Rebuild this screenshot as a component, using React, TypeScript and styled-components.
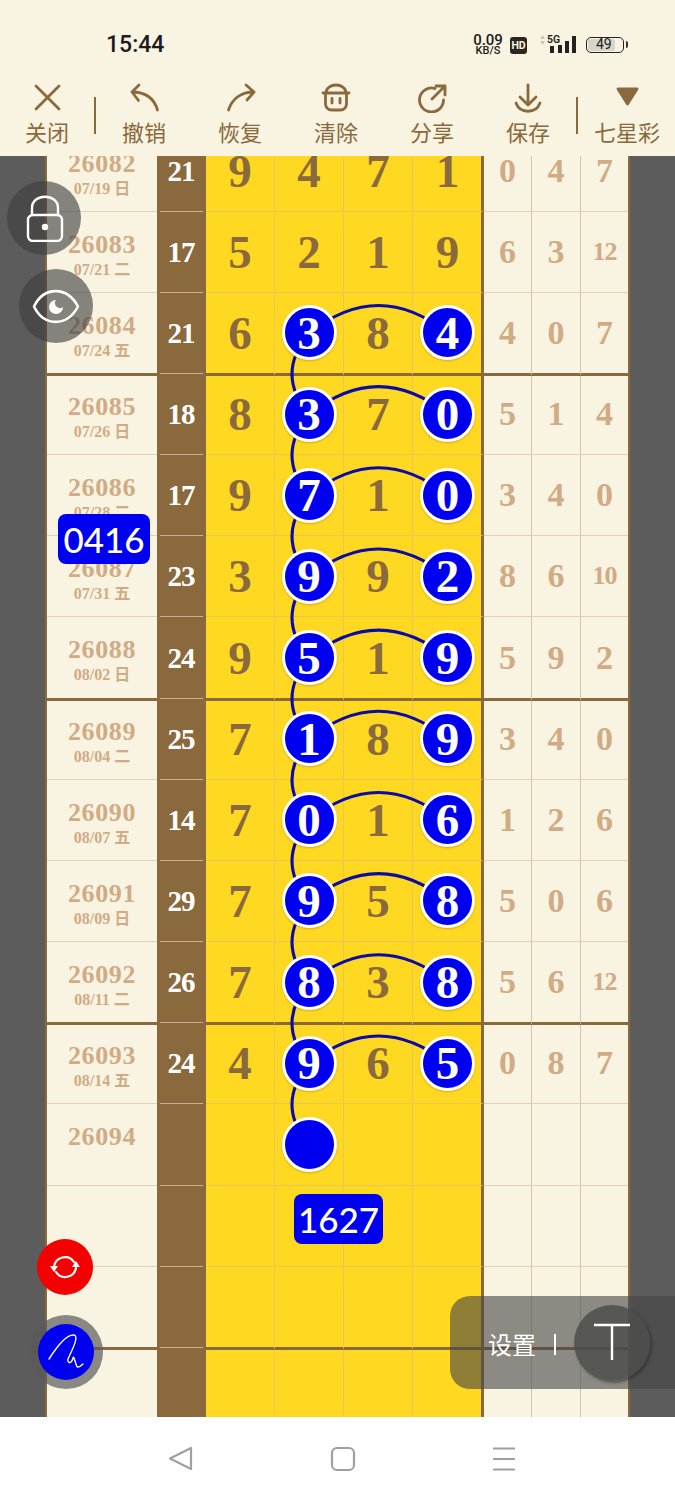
import React from "react";
import styled, { createGlobalStyle } from "styled-components";

const BROWN = "#8a693d";
const CREAM = "#f8f4e1";
const YELLOW = "#ffd821";
const DIM = "#d0ab85";
const DARK = "#5c5c5c";
const BLUE = "#0000f0";
const SERIF = `"Liberation Serif", "Noto Sans CJK SC", serif`;
const CJK = `"Noto Sans CJK SC", "Noto Sans", sans-serif`;
const ROW_H = 81.17;
const FIRST_TOP = -25.5;

const Global = createGlobalStyle`
  html, body { margin: 0; padding: 0; background: #fff; }
  * { box-sizing: border-box; }
`;

const Phone = styled.div`
  position: relative;
  width: 675px;
  height: 1500px;
  overflow: hidden;
  display: flex;
  flex-direction: column;
  background: #fff;
`;

const Header = styled.header`
  height: 156px;
  background: ${CREAM};
  display: flex;
  flex-direction: column;
`;

const StatusBar = styled.div`
  height: 81px;
  padding: 32px 51px 0 106px;
  display: flex;
  justify-content: space-between;
  align-items: flex-start;
  color: #1c1c1c;
`;

const Clock = styled.span`
  font: 500 23px/26px Roboto, sans-serif;
`;

const StatusGroup = styled.div`
  display: flex;
  align-items: center;
  height: 26px;
`;

const Speed = styled.div`
  width: 32px;
  display: flex;
  flex-direction: column;
  align-items: center;
  font: 500 15px/12px Roboto, sans-serif;
  & > small { font-size: 11px; line-height: 10px; }
`;

const HdTag = styled.span`
  margin-left: 6px;
  width: 17px;
  height: 17px;
  border-radius: 3px;
  background: #2b2620;
  color: ${CREAM};
  text-align: center;
  font: 700 10.5px/17px Roboto, sans-serif;
`;

const SignalWrap = styled.div`
  margin-left: 9px;
  position: relative;
  width: 42px;
  height: 26px;
`;

const FiveG = styled.span`
  position: absolute;
  left: 11px;
  top: 2px;
  font: 600 10.5px/11px Roboto, sans-serif;
`;

const Battery = styled.div`
  margin-left: 8px;
  width: 38px;
  height: 16px;
  border: 1.5px solid #222;
  border-radius: 5px;
  padding: 1px;
  position: relative;
  &::after {
    content: "";
    position: absolute;
    right: -5px;
    top: 3px;
    width: 2px;
    height: 7px;
    background: #333;
    border-radius: 0 2px 2px 0;
  }
`;

const BatteryFill = styled.div`
  width: 27px;
  height: 100%;
  border-radius: 2px;
  background: #d5d5c8;
  position: relative;
  font: 400 14px/11px Roboto, sans-serif;
  color: #222;
  & > span { position: absolute; left: 8px; top: 0; }
`;

const Toolbar = styled.nav`
  flex: 1;
  display: flex;
  align-items: flex-start;
`;

const ToolItem = styled.div<{ $w: number }>`
  width: ${(p) => p.$w}px;
  flex: none;
  display: flex;
  flex-direction: column;
  align-items: center;
  color: ${BROWN};
`;

const ToolIcon = styled.svg`
  width: 32px;
  height: 32px;
  display: block;
  fill: none;
  stroke: ${BROWN};
  stroke-width: 2.8;
  stroke-linecap: round;
  stroke-linejoin: round;
`;

const ToolLabel = styled.span`
  margin-top: 5px;
  font: 400 22px/26px ${CJK};
  white-space: nowrap;
`;

const ToolSep = styled.div`
  flex: none;
  width: 2px;
  height: 37px;
  margin-top: 16px;
  background: ${BROWN};
`;

const Board = styled.main`
  position: relative;
  height: 1261px;
  overflow: hidden;
  background: ${DARK};
  padding: 0 45px;
`;

const Sheet = styled.div`
  margin-top: ${FIRST_TOP}px;
  border-left: 2px solid ${BROWN};
  border-right: 2px solid ${BROWN};
  display: grid;
  grid-auto-rows: ${ROW_H}px;
`;

const Row = styled.div`
  display: grid;
  grid-template-columns: 110px 49px 69px 69px 69px 71px 48px 49px 47px;
`;

const cellBorder = (thick?: boolean, color?: string) =>
  thick
    ? `position: relative; margin-bottom: -2px; border-bottom: 3px solid ${BROWN};`
    : `border-bottom: 1px solid ${color};`;

const PeriodCell = styled.div<{ $thick?: boolean }>`
  background: ${CREAM};
  ${(p) => cellBorder(p.$thick, "#e4cfb8")}
  padding-top: 20px;
  display: flex;
  flex-direction: column;
  align-items: center;
  color: ${DIM};
  font-family: ${SERIF};
  font-weight: 700;
`;

const PeriodNo = styled.span`
  font-size: 26px;
  line-height: 26px;
  letter-spacing: 0.6px;
`;

const PeriodDate = styled.span`
  margin-top: 2px;
  font-size: 16px;
  line-height: 20px;
  white-space: pre;
`;

const SumCell = styled.div`
  position: relative;
  background: ${BROWN};
  color: #fff;
  display: flex;
  align-items: center;
  justify-content: center;
  padding-right: 1px;
  font: 700 29px ${SERIF};
  letter-spacing: -1px;
  &::after {
    content: "";
    position: absolute;
    left: 3px;
    right: 3px;
    bottom: 0;
    height: 1px;
    background: #c9b08c;
  }
`;

const NumCell = styled.div<{ $thick?: boolean; $last?: boolean }>`
  background: ${YELLOW};
  ${(p) => cellBorder(p.$thick, "#eac653")}
  border-right: ${(p) => (p.$last ? `3px solid ${BROWN}` : "1px solid #eac653")};
  padding-left: ${(p) => (p.$last ? "1px" : "0")};
  display: flex;
  align-items: center;
  justify-content: center;
  color: ${BROWN};
  font: 700 47px ${SERIF};
`;

const Ball = styled.div`
  position: relative;
  z-index: 2;
  width: 55px;
  height: 55px;
  flex: none;
  border-radius: 50%;
  background: ${BLUE};
  border: 3px solid #fff;
  box-shadow: 0 1px 2px rgba(120, 90, 0, 0.35);
  color: #fff;
  display: flex;
  align-items: center;
  justify-content: center;
  font: 700 47px ${SERIF};
`;

const TailCell = styled.div<{ $thick?: boolean; $last?: boolean; $small?: boolean }>`
  background: ${CREAM};
  ${(p) => cellBorder(p.$thick, "#e4cfb8")}
  border-right: ${(p) => (p.$last ? "0" : "1px solid #d6c3aa")};
  display: flex;
  align-items: center;
  justify-content: center;
  color: ${DIM};
  font: 700 ${(p) => (p.$small ? "26px" : "34px")} ${SERIF};
  letter-spacing: ${(p) => (p.$small ? "-1px" : "0")};
`;

const Links = styled.svg`
  position: absolute;
  left: 0;
  top: 0;
  width: 675px;
  height: 1261px;
  z-index: 1;
  fill: none;
  stroke: #0b0ba6;
  stroke-width: 3;
  pointer-events: none;
`;

const CodeBadge = styled.div<{ $x: number; $y: number; $w: number }>`
  position: absolute;
  z-index: 3;
  left: ${(p) => p.$x}px;
  top: ${(p) => p.$y}px;
  width: ${(p) => p.$w}px;
  height: 50px;
  border-radius: 8px;
  background: ${BLUE};
  color: #fff;
  text-align: center;
  font: 500 35px/51px Lato, sans-serif;
`;

const RoundFloat = styled.div<{ $x: number; $y: number; $r: number; $bg: string }>`
  position: absolute;
  z-index: 4;
  left: ${(p) => p.$x - p.$r}px;
  top: ${(p) => p.$y - p.$r}px;
  width: ${(p) => p.$r * 2}px;
  height: ${(p) => p.$r * 2}px;
  border-radius: 50%;
  background: ${(p) => p.$bg};
  display: flex;
  align-items: center;
  justify-content: center;
`;

const FloatIcon = styled.svg<{ $size: number; $sw: number }>`
  width: ${(p) => p.$size}px;
  height: ${(p) => p.$size}px;
  flex: none;
  fill: none;
  stroke: #fff;
  stroke-width: ${(p) => p.$sw};
  stroke-linecap: round;
  stroke-linejoin: round;
`;

const SettingsPanel = styled.div`
  position: absolute;
  z-index: 4;
  left: 450px;
  top: 1296px;
  width: 225px;
  height: 93px;
  border-radius: 20px 0 0 20px;
  background: rgba(68, 68, 68, 0.6);
  display: flex;
  align-items: center;
  padding: 0 0 0 38px;
  color: #fff;
`;

const SettingsLabel = styled.span`
  font: 400 24px/30px ${CJK};
  margin-top: 2px;
`;

const SettingsSep = styled.span`
  width: 2px;
  height: 21px;
  margin: 4px 0 0 18px;
  background: #fff;
`;

const TextKnob = styled.div`
  position: absolute;
  left: 124px;
  top: 9px;
  width: 76px;
  height: 76px;
  border-radius: 50%;
  background: rgba(78, 78, 76, 0.85);
  box-shadow: 2px 2px 3px rgba(40, 40, 40, 0.55);
  display: flex;
  align-items: center;
  justify-content: center;
`;

const NavBar = styled.footer`
  flex: 1;
  background: #fff;
  display: flex;
  align-items: center;
  justify-content: flex-start;
  padding: 0 0 0 165px;
  gap: 129.5px;
`;

const NavIcon = styled.svg`
  width: 32px;
  height: 32px;
  fill: none;
  stroke: #a0a0a0;
  stroke-width: 2.2;
  stroke-linejoin: round;
  flex: none;
`;

type Rec = { no: string; date?: string; sum?: string; nums: string[]; hits?: number[]; tail: string[] };

const empty = { nums: ["", "", "", ""], tail: ["", "", ""] };

const rows: Rec[] = [
  { no: "26082", date: "07/19 日", sum: "21", nums: ["9", "4", "7", "1"], tail: ["0", "4", "7"] },
  { no: "26083", date: "07/21 二", sum: "17", nums: ["5", "2", "1", "9"], tail: ["6", "3", "12"] },
  { no: "26084", date: "07/24 五", sum: "21", nums: ["6", "3", "8", "4"], hits: [1, 3], tail: ["4", "0", "7"] },
  { no: "26085", date: "07/26 日", sum: "18", nums: ["8", "3", "7", "0"], hits: [1, 3], tail: ["5", "1", "4"] },
  { no: "26086", date: "07/28 二", sum: "17", nums: ["9", "7", "1", "0"], hits: [1, 3], tail: ["3", "4", "0"] },
  { no: "26087", date: "07/31 五", sum: "23", nums: ["3", "9", "9", "2"], hits: [1, 3], tail: ["8", "6", "10"] },
  { no: "26088", date: "08/02 日", sum: "24", nums: ["9", "5", "1", "9"], hits: [1, 3], tail: ["5", "9", "2"] },
  { no: "26089", date: "08/04 二", sum: "25", nums: ["7", "1", "8", "9"], hits: [1, 3], tail: ["3", "4", "0"] },
  { no: "26090", date: "08/07 五", sum: "14", nums: ["7", "0", "1", "6"], hits: [1, 3], tail: ["1", "2", "6"] },
  { no: "26091", date: "08/09 日", sum: "29", nums: ["7", "9", "5", "8"], hits: [1, 3], tail: ["5", "0", "6"] },
  { no: "26092", date: "08/11 二", sum: "26", nums: ["7", "8", "3", "8"], hits: [1, 3], tail: ["5", "6", "12"] },
  { no: "26093", date: "08/14 五", sum: "24", nums: ["4", "9", "6", "5"], hits: [1, 3], tail: ["0", "8", "7"] },
  { no: "26094", ...empty, hits: [1] },
  { no: "", ...empty },
  { no: "", ...empty },
  { no: "", ...empty },
];

const centerY = (i: number) => FIRST_TOP + ROW_H * (i + 0.5);

function buildLinks() {
  const d: string[] = [];
  for (let i = 2; i < 12; i++) {
    const y = centerY(i);
    d.push(`M309 ${y} Q378.5 ${y - 56} 448 ${y}`);
    const ny = centerY(i + 1);
    d.push(`M309 ${y} Q275 ${(y + ny) / 2} 309 ${ny}`);
  }
  return d.join(" ");
}

const tools = [
  { w: 94, cn: "关闭", p: <path d="M5 5 L28 28 M28 5 L5 28" /> },
  { w: 96, cn: "撤销", p: <path d="M11 4 L4 11 L10.5 19.5 M4 11 C17 11 26 17 29.5 29" /> },
  { w: 96, cn: "恢复", p: <path d="M22 4 L30 11 L23 19 M30 11 C17 11 8 18 4.5 29" /> },
  {
    w: 96,
    cn: "清除",
    p: <path d="M3 12 H29 M5.5 12 V23 A6 6 0 0 0 11.5 29 H20.5 A6 6 0 0 0 26.5 23 V12 M6 12 C6 7 11 4 16 4 C21 4 26 7 26 12 M12 17.5 V22 M20 17.5 V22" />,
  },
  { w: 96, cn: "分享", p: <path d="M19 7.5 A12 12 0 1 0 27.5 19 M16 18 L29 5 M20 5 H29 V14" /> },
  { w: 96, cn: "保存", p: <path d="M16 4 V24 M8 16 L16 24 L24 16 M4 22 C8 33 24 33 28 22" /> },
];

export default function App() {
  return (
    <Phone>
      <Global />
      <Header>
        <StatusBar>
          <Clock>15:44</Clock>
          <StatusGroup>
            <Speed>
              0.09
              <small>KB/S</small>
            </Speed>
            <HdTag>HD</HdTag>
            <SignalWrap>
              <svg width="42" height="26" viewBox="0 0 42 26">
                <path d="M4 7 L6.5 3 L9 7 Z M4 9 L6.5 13 L9 9 Z" fill="#c9c6ba" />
                <rect x="14" y="14" width="4" height="7" fill="#222" />
                <rect x="22" y="13" width="4" height="8" fill="#222" />
                <rect x="29" y="9" width="4" height="12" fill="#222" />
                <rect x="36" y="4" width="4" height="17" fill="#222" />
              </svg>
              <FiveG>5G</FiveG>
            </SignalWrap>
            <Battery>
              <BatteryFill>
                <span>49</span>
              </BatteryFill>
            </Battery>
          </StatusGroup>
        </StatusBar>
        <Toolbar>
          {tools.map((t, i) => (
            <React.Fragment key={t.cn}>
              <ToolItem $w={t.w}>
                <ToolIcon viewBox="0 0 32 32">{t.p}</ToolIcon>
                <ToolLabel>{t.cn}</ToolLabel>
              </ToolItem>
              {i === 0 && <ToolSep />}
            </React.Fragment>
          ))}
          <ToolSep />
          <ToolItem $w={98}>
            <ToolIcon viewBox="0 0 32 32">
              <path d="M7 8 H26 L16.5 23 Z" fill={BROWN} />
            </ToolIcon>
            <ToolLabel>七星彩</ToolLabel>
          </ToolItem>
        </Toolbar>
      </Header>

      <Board>
        <Sheet>
          {rows.map((r, i) => {
            const thick = i % 4 === 2;
            return (
              <Row key={i}>
                <PeriodCell $thick={thick}>
                  <PeriodNo>{r.no}</PeriodNo>
                  {r.date && <PeriodDate>{r.date}</PeriodDate>}
                </PeriodCell>
                <SumCell>{r.sum}</SumCell>
                {r.nums.map((n, j) => (
                  <NumCell key={j} $thick={thick} $last={j === 3}>
                    {r.hits?.includes(j) ? <Ball>{n}</Ball> : n}
                  </NumCell>
                ))}
                {r.tail.map((n, j) => (
                  <TailCell key={j} $thick={thick} $last={j === 2} $small={n.length > 1}>
                    {n}
                  </TailCell>
                ))}
              </Row>
            );
          })}
        </Sheet>
        <Links viewBox="0 0 675 1261">
          <path d={buildLinks()} />
        </Links>
        <CodeBadge $x={58} $y={358} $w={92}>0416</CodeBadge>
        <CodeBadge $x={294} $y={1038} $w={89}>1627</CodeBadge>
      </Board>

      <RoundFloat $x={44} $y={218} $r={37} $bg="rgba(62,62,62,0.62)">
        <FloatIcon $size={48} $sw={2.4} viewBox="0 0 48 48">
          <rect x="8" y="21" width="34" height="26" rx="5" />
          <path d="M12 21 V14 C12 -1 38 -1 38 14 V21" />
          <circle cx="25" cy="33" r="3.2" fill="#fff" stroke="none" />
        </FloatIcon>
      </RoundFloat>
      <RoundFloat $x={56} $y={306} $r={37} $bg="rgba(62,62,62,0.62)">
        <FloatIcon $size={48} $sw={2.6} viewBox="0 0 48 48">
          <path d="M2 24.5 C12 4 35 4 46 24.5 C35 45 12 45 2 24.5 Z" />
          <path d="M24 18 A7 7 0 1 0 31 25 A5 5 0 0 1 24 18 Z" fill="#fff" stroke="none" />
        </FloatIcon>
      </RoundFloat>

      <RoundFloat $x={65} $y={1267} $r={28} $bg="#f50000">
        <FloatIcon $size={40} $sw={2.2} viewBox="0 0 40 40">
          <path d="M9 20 A11 11 0 0 1 29 15 M31 21 A11 11 0 0 1 11 25" />
          <path d="M5 19 L13 19 L9 25 Z M27 20 L35 20 L31 14 Z" fill="#fff" stroke="none" />
        </FloatIcon>
      </RoundFloat>
      <RoundFloat $x={65.5} $y={1352} $r={37} $bg="rgba(90,90,90,0.7)">
        <RoundFloat $x={37} $y={37} $r={28} $bg={BLUE}>
          <FloatIcon $size={56} $sw={1.4} viewBox="0 0 56 56">
            <path d="M11 35 C18 24 28 10 36 11 C42 12 32 30 30 35 C29 39 33 41 35 34 C36 30 38 44 40 43 C42 43 44 41 45 40" />
          </FloatIcon>
        </RoundFloat>
      </RoundFloat>

      <SettingsPanel>
        <SettingsLabel>设置</SettingsLabel>
        <SettingsSep />
        <TextKnob>
          <FloatIcon $size={40} $sw={2.4} viewBox="0 0 40 40">
            <path d="M2 2 H38 M20 2 V37" strokeLinecap="butt" />
          </FloatIcon>
        </TextKnob>
      </SettingsPanel>

      <NavBar>
        <NavIcon viewBox="0 0 32 32">
          <path d="M5 15.5 L26 5 V26 Z" />
        </NavIcon>
        <NavIcon viewBox="0 0 32 32">
          <rect x="5" y="5" width="22" height="22" rx="5" />
        </NavIcon>
        <NavIcon viewBox="0 0 32 32">
          <path d="M5 5.5 H27 M5 16 H27 M5 26.5 H27" />
        </NavIcon>
      </NavBar>
    </Phone>
  );
}
